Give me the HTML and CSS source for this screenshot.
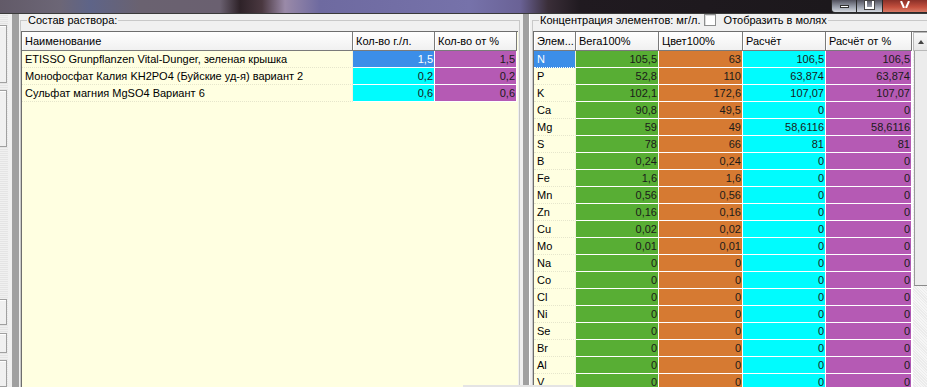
FILE: index.html
```html
<!DOCTYPE html>
<html lang="ru">
<head>
    <meta charset="UTF-8">
    <title>Состав раствора</title>
    <link rel="stylesheet" href="styles.css">
</head>
<body>
    <div class="titlebar">
        <div class="caption-buttons">
            <div class="cap-btn cap-min"><span class="icon-min"></span></div>
            <div class="cap-btn cap-max"><span class="icon-max"></span></div>
            <div class="cap-btn cap-close">
                <svg class="icon-close" width="10" height="7" viewBox="0 0 10 7">
                    <path d="M1 0 L4 7 M9 0 L6 7" stroke="#fff" stroke-width="2" fill="none"/>
                </svg>
            </div>
        </div>
    </div>

    <div class="workspace">
        <div class="toolstrip">
            <div class="tool tool-a"></div>
            <div class="tool tool-b"></div>
            <div class="tool tool-c"></div>
            <div class="tool tool-d"></div>
            <div class="tool tool-e"></div>
        </div>

        <div class="splitter splitter-left"></div>

        <!-- Состав раствора -->
        <fieldset class="group group-left">
            <legend>Состав раствора:</legend>
            <div class="grid-wrap">
                <table class="grid">
                    <thead>
                        <tr>
                            <th class="c-name">Наименование</th>
                            <th class="c-qty">Кол-во г./л.</th>
                            <th class="c-qty">Кол-во от %</th>
                        </tr>
                    </thead>
                    <tbody>
                        <tr>
                            <td class="txt">ETISSO Grunpflanzen Vital-Dunger, зеленая крышка</td>
                            <td class="num sel">1,5</td>
                            <td class="num purple">1,5</td>
                        </tr>
                        <tr>
                            <td class="txt">Монофосфат Калия KH2PO4 (Буйские уд-я) вариант 2</td>
                            <td class="num cyan">0,2</td>
                            <td class="num purple">0,2</td>
                        </tr>
                        <tr>
                            <td class="txt">Сульфат магния MgSO4 Вариант 6</td>
                            <td class="num cyan">0,6</td>
                            <td class="num purple">0,6</td>
                        </tr>
                    </tbody>
                </table>
            </div>
        </fieldset>

        <div class="splitter splitter-right"></div>

        <!-- Концентрация элементов -->
        <fieldset class="group group-right">
            <legend>Концентрация элементов: мг/л. <span class="check"></span> Отобразить в молях</legend>
            <div class="grid-wrap grid-wrap-right">
                <table class="grid">
                    <thead>
                        <tr>
                            <th class="c-el">Элем...</th>
                            <th class="c-vega">Вега100%</th>
                            <th class="c-cvet">Цвет100%</th>
                            <th class="c-calc">Расчёт</th>
                            <th class="c-pct">Расчёт от %</th>
                        </tr>
                    </thead>
                    <tbody id="elements"></tbody>
                </table>
                <div class="vscroll">
                    <div class="vscroll-up"><span class="arrow-up"></span></div>
                    <div class="vscroll-thumb"></div>
                </div>
            </div>
        </fieldset>
    </div>

    <div class="hint-bar"></div>

    <script>
        // Element concentrations: name, Вега, Цвет, Расчёт, Расчёт от %
        const elements = [
            ['N', '105,5', '63', '106,5', '106,5'],
            ['P', '52,8', '110', '63,874', '63,874'],
            ['K', '102,1', '172,6', '107,07', '107,07'],
            ['Ca', '90,8', '49,5', '0', '0'],
            ['Mg', '59', '49', '58,6116', '58,6116'],
            ['S', '78', '66', '81', '81'],
            ['B', '0,24', '0,24', '0', '0'],
            ['Fe', '1,6', '1,6', '0', '0'],
            ['Mn', '0,56', '0,56', '0', '0'],
            ['Zn', '0,16', '0,16', '0', '0'],
            ['Cu', '0,02', '0,02', '0', '0'],
            ['Mo', '0,01', '0,01', '0', '0'],
            ['Na', '0', '0', '0', '0'],
            ['Co', '0', '0', '0', '0'],
            ['Cl', '0', '0', '0', '0'],
            ['Ni', '0', '0', '0', '0'],
            ['Se', '0', '0', '0', '0'],
            ['Br', '0', '0', '0', '0'],
            ['Al', '0', '0', '0', '0'],
            ['V', '0', '0', '0', '0']
        ];
        const colours = ['green', 'orange', 'cyan', 'purple'];
        const body = document.getElementById('elements');

        elements.forEach((row, i) => {
            const tr = document.createElement('tr');
            const name = document.createElement('td');
            name.className = i === 0 ? 'txt sel' : 'txt';
            name.textContent = row[0];
            tr.appendChild(name);
            for (let c = 1; c < row.length; c++) {
                const td = document.createElement('td');
                td.className = 'num ' + colours[c - 1];
                td.textContent = row[c];
                tr.appendChild(td);
            }
            body.appendChild(tr);
        });
    </script>
</body>
</html>
```

FILE: styles.css
```css
* {
    box-sizing: border-box;
}

body {
    margin: 0;
    width: 927px;
    height: 387px;
    overflow: hidden;
    position: relative;
    background-color: #f0f0f0;
    font-family: "Liberation Sans", Arial, sans-serif;
    font-size: 11px;
    color: #000;
}

/* Title strip */
.titlebar {
    height: 14px;
    border-bottom: 1px solid #3a3a3a;
    background: linear-gradient(to right,
        #625a68 0, #6c6676 60px, #5e6488 90px, #6a6270 140px,
        #6a6070 220px, #2e2228 240px, #4a3840 262px, #9a8aa8 285px,
        #6e6aa0 320px, #7672aa 470px, #6a6296 520px, #3a2e38 548px,
        #201a20 580px, #1c181c 830px);
    display: flex;
    justify-content: flex-end;
}

.caption-buttons {
    display: flex;
    height: 13px;
}

.cap-btn {
    height: 13px;
    border: 1px solid #2a2a2a;
    border-top: none;
    display: flex;
    justify-content: center;
    align-items: flex-start;
}

.cap-min {
    width: 26px;
    border-radius: 0 0 0 4px;
    background: linear-gradient(to bottom, #50505c, #9ea4b0 60%, #d4d8de);
}

.cap-max {
    width: 26px;
    border-left: none;
    background: linear-gradient(to bottom, #50505c, #9ea4b0 60%, #d4d8de);
}

.cap-close {
    width: 44px;
    border-left: none;
    border-right: none;
    background: linear-gradient(to bottom, #8a3028, #c4503e 60%, #d87a66);
}

.icon-min {
    width: 9px;
    height: 3px;
    margin-top: 5px;
    background: #fff;
    border: 1px solid #333;
}

.icon-max {
    width: 9px;
    height: 8px;
    margin-top: 1px;
    border: 2px solid #fff;
    border-top: none;
    outline: 1px solid #444;
}

.icon-close {
    display: block;
    margin-top: 1px;
}

/* Main area */
.workspace {
    display: flex;
    height: 373px;
}

.workspace > * {
    flex-shrink: 0;
}

.toolstrip {
    width: 8px;
    display: flex;
    flex-direction: column;
    background: repeating-linear-gradient(to bottom, #f0f0f0 0, #f0f0f0 1px, #e4e4e4 1px, #e4e4e4 2px);
}

.tool {
    width: 7px;
    background: #f0f0f0;
    border: 1px solid #a0a0a0;
    border-left: none;
    box-shadow: inset 0 1px 0 #fff;
}

.tool-a { margin-top: 11px; height: 65px; }
.tool-b { margin-top: 7px; height: 64px; }
.tool-c { margin-top: 152px; height: 29px; }
.tool-d { margin-top: 8px; height: 23px; }
.tool-e { margin-top: 7px; height: 30px; }

.splitter {
    width: 7px;
    background-color: #a0a0a0;
}

.splitter-left {
    margin-left: 4px;
    margin-right: 1px;
}

.splitter-right {
    margin-left: 3px;
    margin-right: 2px;
    border-right: 1px solid #fff;
}

/* Group boxes */
.group {
    margin: 0;
    padding: 4px 1px 0 0;
    border: 1px solid #c8c8c8;
    border-bottom: none;
    min-width: 0;
}

.group legend {
    padding: 0 1px;
    margin-left: 6px;
    line-height: 13px;
    height: 13px;
    color: #000;
}

.group-left {
    width: 500px;
}

.group-right {
    width: 400px;
}

.check {
    display: inline-block;
    width: 12px;
    height: 12px;
    vertical-align: -2px;
    margin: 0 5px 0 0;
    background: #fff;
    border: 1px solid #8e8f8f;
    box-shadow: inset 1px 1px 0 #dcdcdc;
}

.grid-wrap {
    height: 400px;
    background-color: #ffffe1;
    border: 1px solid #6e6e6e;
    border-right: none;
}

.grid-wrap-right {
    display: flex;
    align-items: flex-start;
}

/* Grids */
.grid {
    border-collapse: separate;
    border-spacing: 0;
    table-layout: fixed;
}

.grid th {
    height: 19px;
    padding: 0 0 0 3px;
    text-align: left;
    font-weight: normal;
    white-space: nowrap;
    overflow: hidden;
    background: linear-gradient(to bottom, #ffffff, #f0f0f0);
    border-right: 1px solid #7a7a7a;
    border-bottom: 1px solid #7a7a7a;
    box-shadow: inset 1px 0 0 #fff;
}

.c-name { width: 331px; }
.c-qty { width: 82px; }
.c-el { width: 42px; }
.c-vega { width: 83px; }
.c-cvet { width: 84px; }
.c-calc { width: 83px; }
.c-pct { width: 86px; }

.grid td {
    height: 17px;
    padding: 0 1px 0 3px;
    white-space: nowrap;
    overflow: hidden;
    border-bottom: 1px solid #fff;
    border-right: 1px solid #fff;
    line-height: 16px;
}

.grid td.txt {
    border-bottom: 1px dotted #e6e6cc;
    border-right: 1px solid #f4f4dc;
}

.grid td.num {
    text-align: right;
    color: #1a1a1a;
}

.grid td.sel {
    background-color: #3c8ee8;
    color: #fff;
    border-bottom-color: #fff;
}

.green { background-color: #58ae34; }
.orange { background-color: #d67a32; }
.cyan { background-color: #00fcfe; }
.purple { background-color: #b55ab4; }

/* Vertical scrollbar */
.vscroll {
    width: 16px;
    height: 400px;
    background: repeating-linear-gradient(45deg, #f6f6f6 0, #f6f6f6 1px, #ebebeb 1px, #ebebeb 2px);
    border-left: 1px solid #fff;
}

.vscroll-up {
    height: 19px;
    background: linear-gradient(to bottom, #f8f8f8, #e6e6e6);
    border: 1px solid #b8b8b8;
    display: flex;
    justify-content: center;
    align-items: center;
}

.arrow-up {
    width: 0;
    height: 0;
    border-left: 3px solid transparent;
    border-right: 3px solid transparent;
    border-bottom: 4px solid #444;
}

.vscroll-thumb {
    height: 235px;
    margin-left: 1px;
    background: #ececec;
    border-left: 1px solid #9a9a9a;
    border-bottom: 1px solid #8a8a8a;
}

.hint-bar {
    position: absolute;
    left: 463px;
    bottom: 0;
    width: 110px;
    height: 2px;
    background-color: #e4e4e4;
}
```
